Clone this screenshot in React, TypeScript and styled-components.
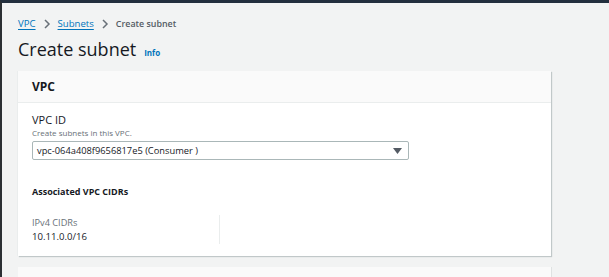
import React from 'react';
import styled, { createGlobalStyle } from 'styled-components';

const GlobalStyle = createGlobalStyle`
  html, body {
    margin: 0;
    padding: 0;
    background: #f2f3f3;
    font-family: "Open Sans", "Noto Sans", Arial, sans-serif;
    color: #16191f;
  }
`;

const Page = styled.div`
  width: 609px;
  height: 277px;
  overflow: hidden;
  box-sizing: border-box;
  border-top: 3px solid #232f3e;
  border-left: 2px solid #2b2f33;
  background: #f2f3f3;
`;

const Main = styled.div`
  width: 533px;
  padding: 13px 0 0 16px;
`;

const Breadcrumbs = styled.nav`
  display: flex;
  align-items: center;
  gap: 7px;
  font-size: 9.6px;
  line-height: 16px;
`;

const Crumb = styled.a`
  color: #0073bb;
  text-decoration: underline;
  text-underline-offset: 2px;
`;

const Current = styled.span`
  color: #545b64;
  font-weight: 600;
  font-size: 8.9px;
`;

const Chevron = styled.svg`
  width: 8px;
  height: 10px;
  stroke: #687078;
  stroke-width: 1.5;
  fill: none;
`;

const TitleRow = styled.div`
  display: flex;
  align-items: baseline;
  gap: 8px;
  margin-top: 5px;
`;

const Title = styled.h1`
  margin: 0;
  font-size: 18px;
  font-weight: 400;
  line-height: 24px;
`;

const InfoLink = styled.span`
  font-size: 8px;
  font-weight: 700;
  color: #0073bb;
`;

const Card = styled.section`
  margin-top: 10px;
  background: #fff;
  box-shadow: 1px 1px 1px 0 rgba(0, 28, 36, 0.2), -1px 0 0 0 #eaeded;
`;

const CardHeader = styled.div`
  background: #fafafa;
  border-bottom: 1px solid #eaeded;
  height: 31px;
  padding: 0 14px;
  display: flex;
  align-items: center;
  font-size: 12px;
  font-weight: 700;
`;

const CardBody = styled.div`
  padding: 10px 14px 12px;
`;

const Label = styled.div`
  font-size: 11px;
  line-height: 14px;
`;

const Hint = styled.div`
  font-size: 8px;
  line-height: 12px;
  color: #687078;
`;

const SelectBox = styled.div`
  margin-top: 2px;
  width: 377px;
  height: 19px;
  box-sizing: border-box;
  border: 1px solid #aab7b8;
  border-radius: 2px;
  padding: 0 6px 0 4px;
  display: flex;
  align-items: center;
  justify-content: space-between;
  font-size: 9.3px;
`;

const Caret = styled.svg`
  width: 9px;
  height: 6px;
  fill: #545b64;
`;

const SubHeading = styled.div`
  margin-top: 25px;
  font-size: 9px;
  line-height: 14px;
  font-weight: 700;
`;

const Columns = styled.div`
  display: grid;
  grid-template-columns: 188px 1fr;
  margin-top: 16px;
`;

const Column = styled.div<{ $divider?: boolean }>`
  padding: 1px 0 0;
  border-right: ${(p) => (p.$divider ? '1px solid #eaeded' : 'none')};
`;

const KeyLabel = styled.div`
  font-size: 9.2px;
  line-height: 14px;
  color: #687078;
`;

const Value = styled.div`
  font-size: 9.6px;
  line-height: 14px;
`;

const NextCard = styled.section`
  margin-top: 11px;
  height: 30px;
  background: #fafafa;
  box-shadow: 1px 0 0 0 #dfe2e2;
`;

function ChevronIcon() {
  return (
    <Chevron viewBox="0 0 8 10">
      <path d="M2 1l4 4-4 4" />
    </Chevron>
  );
}

export default function App() {
  return (
    <Page>
      <GlobalStyle />
      <Main>
        <Breadcrumbs>
          <Crumb>VPC</Crumb>
          <ChevronIcon />
          <Crumb>Subnets</Crumb>
          <ChevronIcon />
          <Current>Create subnet</Current>
        </Breadcrumbs>
        <TitleRow>
          <Title>Create subnet</Title>
          <InfoLink>Info</InfoLink>
        </TitleRow>
        <Card>
          <CardHeader>VPC</CardHeader>
          <CardBody>
            <Label>VPC ID</Label>
            <Hint>Create subnets in this VPC.</Hint>
            <SelectBox>
              <span>vpc-064a408f9656817e5 (Consumer )</span>
              <Caret viewBox="0 0 9 6">
                <path d="M0 0h9L4.5 6z" />
              </Caret>
            </SelectBox>
            <SubHeading>Associated VPC CIDRs</SubHeading>
            <Columns>
              <Column $divider>
                <KeyLabel>IPv4 CIDRs</KeyLabel>
                <Value>10.11.0.0/16</Value>
              </Column>
              <Column />
            </Columns>
          </CardBody>
        </Card>
        <NextCard />
      </Main>
    </Page>
  );
}
